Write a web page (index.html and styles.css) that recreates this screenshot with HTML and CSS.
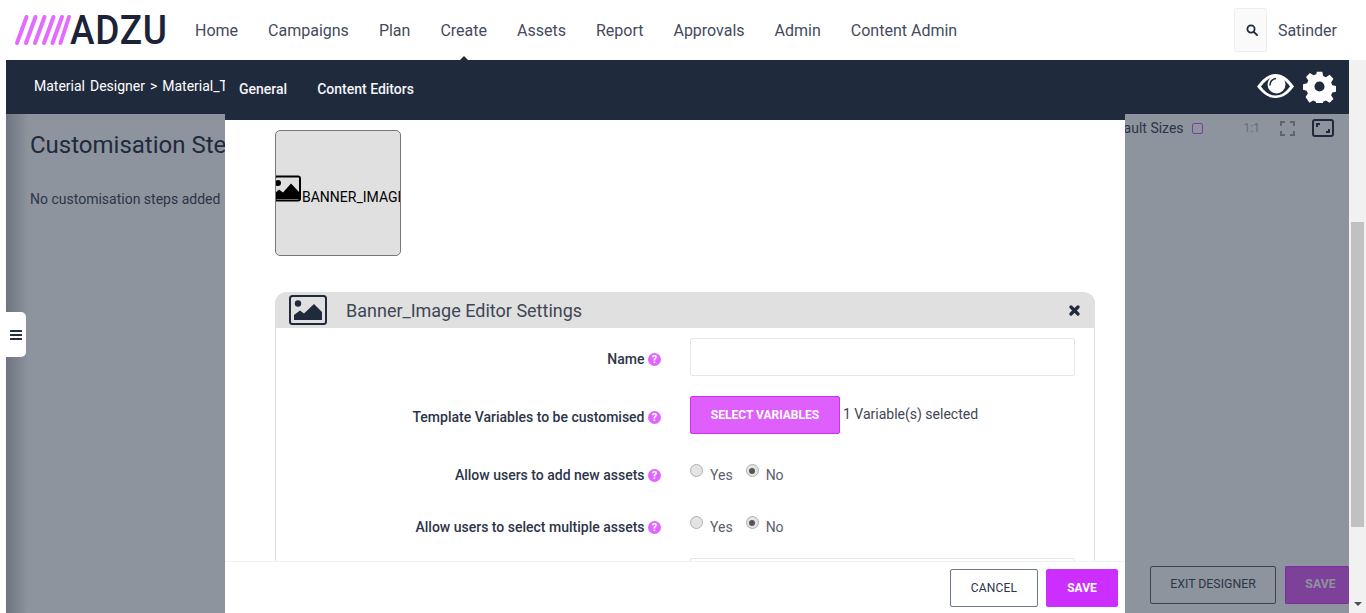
FILE: index.html
```html
<!DOCTYPE html>
<html>
<head>
	<title>Material Designer</title>
	<link rel="stylesheet" href="styles.css">
</head>
<body>
	<header class="topnav">
		<a class="logo">
			<svg class="logo-bars" width="56" height="32" viewBox="0 0 56 32">
				<g stroke="#e36bff" stroke-width="4" stroke-linecap="round">
					<line x1="3" y1="29" x2="12.500" y2="3"/>
					<line x1="12" y1="29" x2="21.500" y2="3"/>
					<line x1="21" y1="29" x2="30.500" y2="3"/>
					<line x1="30" y1="29" x2="39.500" y2="3"/>
					<line x1="38.500" y1="29" x2="48" y2="3"/>
					<line x1="46.500" y1="29" x2="55" y2="3"/>
				</g>
			</svg>
			<span class="logo-text">ADZU</span>
		</a>
		<nav class="menu">
			<a>Home</a>
			<a>Campaigns</a>
			<a>Plan</a>
			<a class="current">Create</a>
			<a>Assets</a>
			<a>Report</a>
			<a>Approvals</a>
			<a>Admin</a>
			<a>Content Admin</a>
		</nav>
		<div class="search-btn">
			<svg width="12" height="12" viewBox="0 0 12 12" fill="none" stroke="#202a3d" stroke-width="1.800"><circle cx="5" cy="5" r="3.600"/><line x1="7.800" y1="7.800" x2="11" y2="11" stroke-linecap="round"/></svg>
		</div>
		<div class="user">Satinder</div>
	</header>

	<div class="page">
		<div class="designer">
			<div class="subbar">
				<div class="crumbs">Material Designer &gt; Material_Template</div>
				<div class="subbar-icons">
					<svg width="37" height="26" viewBox="0 0 37 26">
						<path d="M0 13.500C6 5 12 1 18.500 1S31 5 37 13.500C31 21.500 25 25 18.500 25S6 21.500 0 13.500Z" fill="#fff"/>
						<path d="M4 13.500C8.500 7.500 13 4 18.500 4S28.500 7.500 33 13.500C28.500 19.500 24 22.500 18.500 22.500S8.500 19.500 4 13.500Z" fill="#202a3d"/>
						<circle cx="19.500" cy="11.500" r="9" fill="#fff"/>
						<path d="M13 12.500A6.500 6.500 0 0 1 19 5.500" stroke="#202a3d" stroke-width="1.600" fill="none"/>
					</svg>
					<svg width="33" height="33" viewBox="-2 -2 36 36">
						<path fill="#fff" fill-rule="evenodd" d="M13 0h6l1 4.500 3 1.300 4-2.500 4.200 4.200-2.500 4 1.300 3 4.500 1v6l-4.500 1-1.300 3 2.500 4-4.200 4.200-4-2.500-3 1.300-1 4.500h-6l-1-4.500-3-1.300-4 2.500L.8 27.500l2.500-4-1.300-3L-2 19.500v-6l4.500-1 1.300-3-2.500-4L5.500 1.300l4 2.500 3-1.300zM16 10.500a5.500 5.500 0 1 0 0 11 5.500 5.500 0 0 0 0-11z"/>
					</svg>
				</div>
			</div>
			<div class="workarea">
				<div class="steps">
					<h2>Customisation Steps</h2>
					<p>No customisation steps added</p>
				</div>
				<div class="canvas-tools">
					<span class="tool-label">Default Sizes</span>
					<span class="tool-check"></span>
					<span class="tool-ratio">1:1</span>
					<svg class="tool-fit" width="15" height="15" viewBox="0 0 15 15" fill="none" stroke="#5d6470" stroke-width="2"><path d="M1 5V1H5M10 1H14V5M14 10V14H10M5 14H1V10"/></svg>
					<svg width="22" height="18" viewBox="0 0 22 18" fill="none" stroke="#202a3d" stroke-width="2"><rect x="1" y="1" width="20" height="16" rx="2"/><path d="M5 8V5H8M17 10V13H14"/></svg>
				</div>
				<div class="designer-actions">
					<button class="btn-exit">EXIT DESIGNER</button>
					<button class="btn-save-dim">SAVE</button>
				</div>
			</div>
			<div class="side-toggle">
				<svg width="12" height="10" viewBox="0 0 12 10" fill="#202a3d"><rect width="12" height="2" rx=".5"/><rect y="4" width="12" height="2" rx=".5"/><rect y="8" width="12" height="2" rx=".5"/></svg>
			</div>
		</div>

		<div class="modal">
			<div class="modal-tabs">
				<a>General</a>
				<a>Content Editors</a>
			</div>
			<div class="modal-body">
				<div class="editor-tile">
					<svg width="27" height="27" viewBox="0 0 27 27"><rect x="1" y="1.500" width="25" height="24" rx="2" fill="none" stroke="#000" stroke-width="2"/><circle cx="4" cy="8" r="3"/><path d="M1 24V18L5 14.500 9 17.500 17 8.500 25 17V24Z"/></svg>
					<span>BANNER_IMAGE</span>
				</div>

				<section class="settings">
					<div class="settings-head">
						<svg width="38" height="30" viewBox="0 0 38 30"><rect x="1" y="1" width="36" height="28" rx="2.500" fill="none" stroke="#202a3d" stroke-width="2"/><circle cx="9" cy="8.500" r="3.200" fill="#202a3d"/><path d="M5 25V20L11 15.500 15 18.500 25 9 33 17V25Z" fill="#202a3d"/></svg>
						<span class="settings-title">Banner_Image Editor Settings</span>
						<svg class="close" width="11" height="11" viewBox="0 0 11 11" stroke="#202a3d" stroke-width="3.200" stroke-linecap="round"><path d="M2 2L9 9M9 2L2 9"/></svg>
					</div>
					<div class="settings-form">
						<div class="row row-name">
							<label>Name <i class="help">?</i></label>
							<div class="field"><input type="text"></div>
						</div>
						<div class="row row-vars">
							<label>Template Variables to be customised <i class="help">?</i></label>
							<div class="field"><button class="btn-select">SELECT VARIABLES</button><span class="vars-count">1 Variable(s) selected</span></div>
						</div>
						<div class="row row-radio">
							<label>Allow users to add new assets <i class="help">?</i></label>
							<div class="field">
								<span class="radio"></span><span class="radio-text">Yes</span>
								<span class="radio checked"></span><span class="radio-text">No</span>
							</div>
						</div>
						<div class="row row-radio row-radio-end">
							<label>Allow users to select multiple assets <i class="help">?</i></label>
							<div class="field">
								<span class="radio"></span><span class="radio-text">Yes</span>
								<span class="radio checked"></span><span class="radio-text">No</span>
							</div>
						</div>
						<div class="row row-last">
							<div class="field"><input type="text"></div>
						</div>
					</div>
				</section>
			</div>
			<div class="modal-foot">
				<button class="btn-cancel">CANCEL</button>
				<button class="btn-save">SAVE</button>
			</div>
		</div>

		<div class="scrollbar">
			<div class="track"><div class="thumb"></div></div>
			<span class="arrow-down"></span>
		</div>
	</div>
</body>
</html>
```

FILE: styles.css
```css
html, body {
	height: 100%;
}

body {
	margin: 0;
	overflow: hidden;
	background: #fff;
	color: #202a3d;
	font: 14px Roboto, "Liberation Sans", sans-serif;
	display: flex;
	flex-direction: column;
}

/* top navigation */
.topnav {
	height: 60px;
	flex: none;
	display: flex;
	align-items: center;
	background: #fff;
}

.logo {
	display: flex;
	align-items: center;
	margin-left: 14px;
	width: 181px;
}

.logo-bars {
	flex: none;
	overflow: visible;
}

.logo-text {
	font-size: 37px;
	font-weight: 500;
	letter-spacing: .7px;
	color: #1c2338;
	line-height: 1;
	transform: scaleY(1.1);
}

.menu {
	display: flex;
	gap: 30px;
	flex: 1;
}

.menu a {
	font-size: 16px;
	color: #444b5c;
	position: relative;
}

.menu a.current::after {
	content: "";
	position: absolute;
	left: 50%;
	bottom: -22px;
	margin-left: -6px;
	border: 6px solid transparent;
	border-top: 0;
	border-bottom-color: #202a3d;
}

.search-btn {
	width: 33px;
	height: 44px;
	display: flex;
	align-items: center;
	justify-content: center;
	background: #fafafa;
	border: 1px solid #eee;
	border-radius: 2px;
	box-sizing: border-box;
	padding-left: 3px;
}

.user {
	font-size: 16px;
	color: #444b5c;
	margin: 0 29px 0 11px;
}

/* page under the nav */
.page {
	flex: 1;
	display: flex;
	position: relative;
	padding-left: 6px;
	min-height: 0;
}

.designer {
	flex: 1;
	display: flex;
	flex-direction: column;
	position: relative;
	min-width: 0;
}

.subbar {
	height: 54px;
	flex: none;
	background: #202a3d;
	display: flex;
	align-items: center;
	justify-content: space-between;
	color: #fff;
	padding: 0 13px 0 28px;
}

.crumbs {
	font-size: 14px;
	word-spacing: 1.500px;
	margin-top: -3px;
	white-space: nowrap;
}

.subbar-icons {
	display: flex;
	align-items: center;
	gap: 9px;
	margin-top: -2px;
}

.workarea {
	flex: 1;
	background: #8d949e;
	background-image: linear-gradient(to right, #6f7480, #8d949e 22px);
	display: flex;
	position: relative;
	padding: 16px 0 0 24px;
}

.steps h2 {
	margin: 0;
	font-size: 24px;
	font-weight: 400;
	line-height: 30px;
	color: #202a3d;
	white-space: nowrap;
}

.steps p {
	margin: 31px 0 0;
	font-size: 14px;
	color: #2c3548;
}

.canvas-tools {
	position: absolute;
	top: 4px;
	right: 15px;
	display: flex;
	align-items: center;
	height: 20px;
	color: #2c3548;
}

.tool-label {
	margin-right: 8px;
}

.tool-check {
	width: 9px;
	height: 9px;
	border: 1.5px solid #7a3f9e;
	border-radius: 2px;
	margin-right: 41px;
}

.tool-ratio {
	font-size: 12px;
	color: #666c78;
	margin-right: 20px;
}

.tool-fit {
	margin-right: 17px;
}

.designer-actions {
	position: absolute;
	right: 0;
	bottom: 9px;
	display: flex;
	gap: 9px;
}

.designer-actions button {
	height: 38px;
	font: 400 12.300px Roboto, sans-serif;
	border-radius: 2px;
	padding-bottom: 3px;
}

.btn-exit {
	width: 126px;
	background: transparent;
	border: 1px solid #3a4254;
	color: #2c3548;
}

.designer-actions .btn-save-dim {
	width: 64px;
	background: #7d4199;
	border: 1px solid #7a2ea0;
	border-right: 0;
	color: #8d949e;
	font-weight: 700;
	padding-left: 12px;
}

.side-toggle {
	position: absolute;
	left: 0;
	top: 252px;
	width: 20px;
	height: 45px;
	background: #fff;
	border-radius: 0 5px 5px 0;
	display: flex;
	align-items: center;
	justify-content: center;
}

/* modal over the designer */
.modal {
	position: absolute;
	left: 225px;
	top: 0;
	bottom: 0;
	width: 900px;
	background: #fff;
	display: flex;
	flex-direction: column;
}

.modal-tabs {
	height: 60px;
	flex: none;
	background: #202a3d;
	display: flex;
	align-items: center;
	gap: 30px;
	padding-left: 14px;
}

.modal-tabs a {
	color: #f4f5f6;
	font-weight: 500;
	font-size: 14px;
	margin-top: -3px;
}

.modal-body {
	flex: 1;
	min-height: 0;
	overflow: hidden;
	padding: 10px 30px 0 50px;
}

.editor-tile {
	width: 126px;
	height: 126px;
	box-sizing: border-box;
	background: #e0e0e0;
	border: 1px solid #777;
	border-radius: 5px;
	display: flex;
	align-items: center;
	overflow: hidden;
	white-space: nowrap;
	color: #000;
	font-size: 14px;
}

.editor-tile svg {
	flex: none;
	margin-left: -2px;
	margin-bottom: 10px;
}

.editor-tile span {
	margin: 8px 0 0 1px;
}

.settings {
	margin-top: 36px;
	border-left: 1px solid #e0e0e0;
	border-right: 1px solid #e0e0e0;
	border-radius: 12px 12px 0 0;
}

.settings-head {
	height: 36px;
	background: #e0e0e0;
	border-radius: 12px 12px 0 0;
	display: flex;
	align-items: center;
	padding: 0 15px 0 14px;
	margin: 0 -1px;
}

.settings-title {
	flex: 1;
	font-size: 18px;
	color: #3f4654;
	margin-left: 19px;
}

.settings-form {
	padding: 10px 19px 0 0;
}

.row {
	display: flex;
}

.row label {
	width: 385px;
	flex: none;
	text-align: right;
	font-weight: 500;
	color: #2c3548;
	white-space: nowrap;
}

.row .field {
	margin-left: 29px;
	flex: 1;
	display: flex;
	align-items: flex-start;
}

.help {
	display: inline-block;
	width: 13px;
	height: 13px;
	border-radius: 50%;
	background: #e066ff;
	color: #fff;
	font: bold 11px/13px Roboto, sans-serif;
	text-align: center;
	vertical-align: 1px;
}

.row input {
	width: 100%;
	height: 38px;
	box-sizing: border-box;
	border: 1px solid #e6e6e6;
	border-radius: 2px;
	background: #fff;
	padding: 0 10px;
}

.row-name {
	height: 58px;
}

.row-name label {
	line-height: 42px;
}

.row-vars {
	height: 62px;
}

.row-vars label {
	line-height: 42px;
}

.btn-select {
	width: 150px;
	height: 38px;
	background: #df5ffc;
	border: 1px solid #cc2eff;
	border-radius: 2px;
	color: #fff;
	font: 700 12px Roboto, sans-serif;
}

.vars-count {
	margin: 10px 0 0 3px;
	color: #3f4654;
}

.row-radio {
	height: 52px;
}

.row-radio-end {
	height: 48px;
}

.row-radio label {
	line-height: 34px;
}

.row-radio .field {
	padding-top: 6px;
}

.radio {
	width: 13px;
	height: 13px;
	box-sizing: border-box;
	border-radius: 50%;
	border: 1px solid #b0b0b0;
	background: #e4e4e4;
	margin-right: 7px;
	position: relative;
}

.radio.checked::after {
	content: "";
	position: absolute;
	left: 2.500px;
	top: 2.500px;
	width: 6px;
	height: 6px;
	border-radius: 50%;
	background: #555;
}

.radio-text {
	color: #5a606e;
	margin: 3px 13px 0 0;
}

.row-last .field {
	margin-left: 414px;
}

.modal-foot {
	height: 52px;
	flex: none;
	box-sizing: border-box;
	border-top: 1px solid #f2f2f2;
	background: #fff;
	display: flex;
	justify-content: flex-end;
	align-items: center;
	gap: 8px;
	padding: 0 7px 0 0;
}

.modal-foot button {
	height: 38px;
	border-radius: 2px;
	font-size: 12px;
	font-family: Roboto, sans-serif;
}

.btn-cancel {
	width: 88px;
	background: #fff;
	border: 1px solid #6c7787;
	color: #2c3548;
	font-weight: 400;
	letter-spacing: .2px;
}

.btn-save {
	width: 72px;
	background: #cc2eff;
	border: 1px solid #cc2eff;
	color: #fff;
	font-weight: 700;
}

/* scrollbar of the window */
.scrollbar {
	width: 17px;
	flex: none;
	background: #f1f1f1;
	display: flex;
	flex-direction: column;
	align-items: center;
}

.track {
	flex: 1;
	width: 100%;
	padding: 162px 2px 0;
	box-sizing: border-box;
}

.thumb {
	height: 305px;
	background: #c1c1c1;
}

.arrow-down {
	border: 4px solid transparent;
	border-bottom: 0;
	border-top-color: #505050;
	margin: 0 0 7px;
}
```
